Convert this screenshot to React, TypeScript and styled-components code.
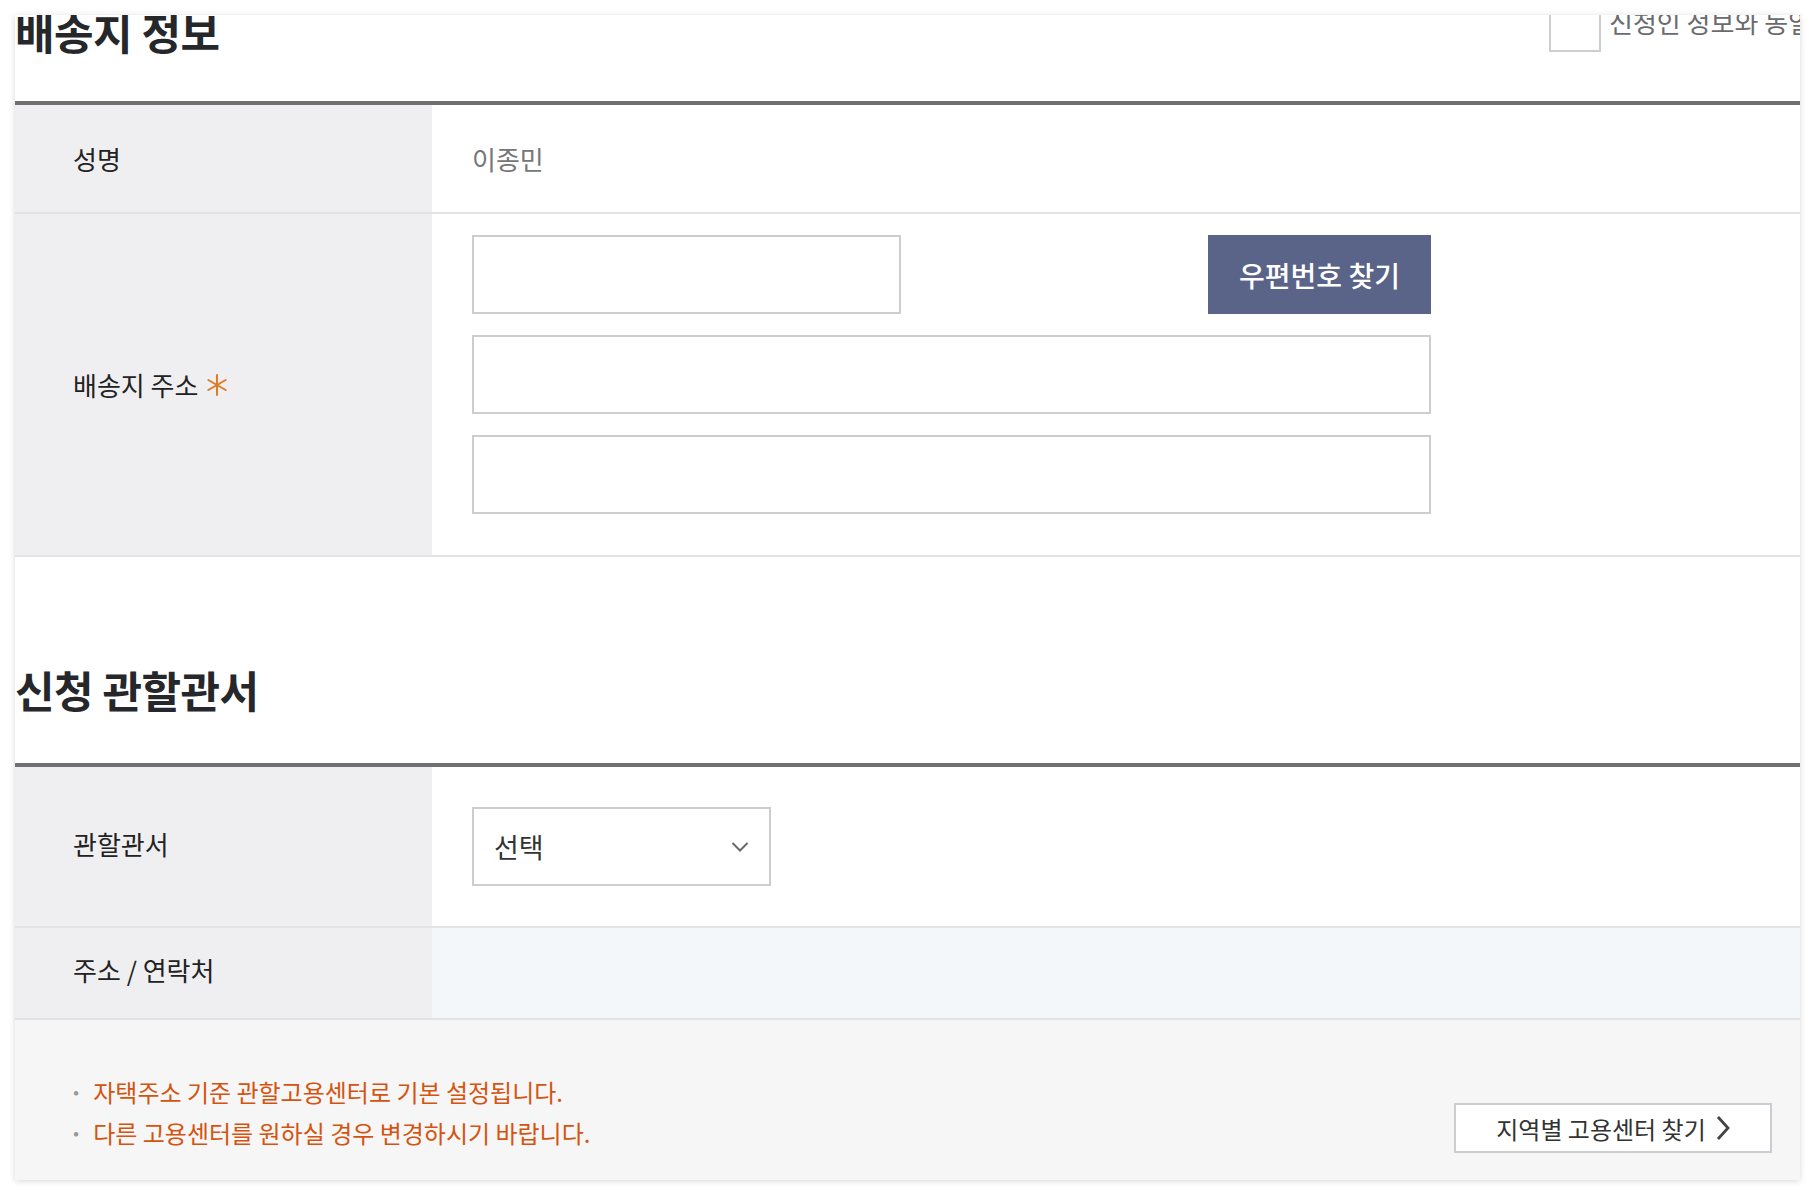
import styled, { createGlobalStyle } from "styled-components";

const GlobalStyle = createGlobalStyle`
  html, body {
    margin: 0;
    padding: 0;
    background: #fff;
    font-family: "Noto Sans CJK KR", "Noto Sans", sans-serif;
    color: #222;
  }
  * { box-sizing: border-box; }
`;

const Page = styled.div`
  padding: 15px 14px 20px 15px;
`;

const Card = styled.div`
  background: #fff;
  overflow: hidden;
  box-shadow: 0 1px 6px rgba(0, 0, 0, 0.16);
`;

const SectionHead = styled.div<{ $top: number; $height: number }>`
  display: flex;
  justify-content: space-between;
  align-items: flex-start;
  margin-top: ${p => p.$top}px;
  height: ${p => p.$height}px;
  border-bottom: 4px solid #6f7072;
`;

const Title = styled.h2<{ $offset: number }>`
  margin: ${p => p.$offset}px 0 0;
  font-size: 43px;
  line-height: 1;
  font-weight: 700;
  color: #26272b;
  letter-spacing: -0.5px;
`;

const SameCheck = styled.label`
  display: flex;
  align-items: flex-start;
  gap: 8px;
  margin-right: -12px;
  font-size: 26px;
  color: #6b6b6e;
  white-space: nowrap;
  line-height: 1;

  span:last-child {
    padding-top: 9px;
  }
`;

const CheckBox = styled.span`
  width: 52px;
  height: 52px;
  border: 2px solid #cdcdd2;
  background: #fff;
  flex-shrink: 0;
`;

const Row = styled.div<{ $height?: number }>`
  display: grid;
  grid-template-columns: 417px 1fr;
  min-height: ${p => (p.$height ? `${p.$height}px` : "auto")};
  border-bottom: 2px solid #e3e3e6;
`;

const Label = styled.div<{ $raise?: boolean }>`
  display: flex;
  align-items: center;
  gap: 8px;
  padding-left: 58px;
  padding-bottom: ${p => (p.$raise ? "7px" : "0")};
  background: #efeff1;
  font-size: 26px;
  color: #222;
`;

const Value = styled.div<{ $tint?: boolean; $pad?: string }>`
  display: flex;
  flex-direction: column;
  justify-content: center;
  padding: ${p => p.$pad ?? "0 0 0 40px"};
  background: ${p => (p.$tint ? "#f4f7fa" : "#fff")};
  font-size: 26px;
  color: #767679;
`;

const AddressBlock = styled.div`
  width: 959px;
  display: flex;
  flex-direction: column;
  gap: 21px;
`;

const PostRow = styled.div`
  display: flex;
  justify-content: space-between;
`;

const TextInput = styled.input<{ $width?: number }>`
  width: ${p => (p.$width ? `${p.$width}px` : "100%")};
  height: 79px;
  border: 2px solid #cdcdd1;
  background: #fff;
  padding: 0 20px;
  font: inherit;
  outline: none;
`;

const DarkButton = styled.button`
  width: 223px;
  height: 79px;
  border: none;
  background: #5a6488;
  color: #fff;
  font-family: inherit;
  font-size: 28px;
  font-weight: 500;
`;

const Spacer = styled.div`
  height: 96px;
`;

const Select = styled.div`
  width: 299px;
  height: 79px;
  border: 2px solid #cdcdd1;
  display: flex;
  align-items: center;
  justify-content: space-between;
  padding: 0 20px;
  font-size: 27px;
  color: #333;
`;

const Notice = styled.div`
  display: flex;
  justify-content: space-between;
  align-items: flex-end;
  background: #f6f6f6;
  padding: 51px 28px 27px 54px;
`;

const NoticeList = styled.ul`
  list-style: none;
  margin: 0;
  padding: 0;
`;

const NoticeItem = styled.li`
  display: flex;
  gap: 10px;
  font-size: 24px;
  line-height: 41px;
  color: #d4540f;

  &::before {
    content: "·";
    color: #999;
    font-weight: 700;
  }
`;

const OutlineButton = styled.button`
  display: flex;
  align-items: center;
  justify-content: center;
  gap: 10px;
  width: 318px;
  height: 50px;
  background: #fff;
  border: 2px solid #cdcdd1;
  font-family: inherit;
  font-size: 24px;
  color: #333;
`;

const Star = () => (
  <svg width="22" height="22" viewBox="0 0 22 22">
    <g stroke="#e07b26" strokeWidth="2" strokeLinecap="round">
      <line x1="11" y1="1" x2="11" y2="21" />
      <line x1="2.3" y1="6" x2="19.7" y2="16" />
      <line x1="2.3" y1="16" x2="19.7" y2="6" />
    </g>
  </svg>
);

const ChevronDown = () => (
  <svg width="18" height="12" viewBox="0 0 18 12">
    <polyline points="1.5,2 9,9.5 16.5,2" fill="none" stroke="#6a6a6d" strokeWidth="2" />
  </svg>
);

const ChevronRight = () => (
  <svg width="14" height="26" viewBox="0 0 14 26">
    <polyline points="2,2 12,13 2,24" fill="none" stroke="#444" strokeWidth="2.8" />
  </svg>
);

export default function App() {
  return (
    <Page>
      <GlobalStyle />
      <Card>
        <SectionHead $top={-15} $height={105}>
          <Title $offset={10}>배송지 정보</Title>
          <SameCheck>
            <CheckBox />
            <span>신청인 정보와 동일</span>
          </SameCheck>
        </SectionHead>
        <Row $height={109}>
          <Label>성명</Label>
          <Value>이종민</Value>
        </Row>
        <Row>
          <Label>
            배송지 주소 <Star />
          </Label>
          <Value $pad="21px 0 41px 40px">
            <AddressBlock>
              <PostRow>
                <TextInput $width={429} />
                <DarkButton>우편번호 찾기</DarkButton>
              </PostRow>
              <TextInput />
              <TextInput />
            </AddressBlock>
          </Value>
        </Row>
        <Spacer />
        <SectionHead $top={0} $height={114}>
          <Title $offset={15}>신청 관할관서</Title>
        </SectionHead>
        <Row $height={161}>
          <Label $raise>관할관서</Label>
          <Value>
            <Select>
              선택
              <ChevronDown />
            </Select>
          </Value>
        </Row>
        <Row $height={92}>
          <Label $raise>주소 / 연락처</Label>
          <Value $tint />
        </Row>
        <Notice>
          <NoticeList>
            <NoticeItem>자택주소 기준 관할고용센터로 기본 설정됩니다.</NoticeItem>
            <NoticeItem>다른 고용센터를 원하실 경우 변경하시기 바랍니다.</NoticeItem>
          </NoticeList>
          <OutlineButton>
            지역별 고용센터 찾기 <ChevronRight />
          </OutlineButton>
        </Notice>
      </Card>
    </Page>
  );
}
